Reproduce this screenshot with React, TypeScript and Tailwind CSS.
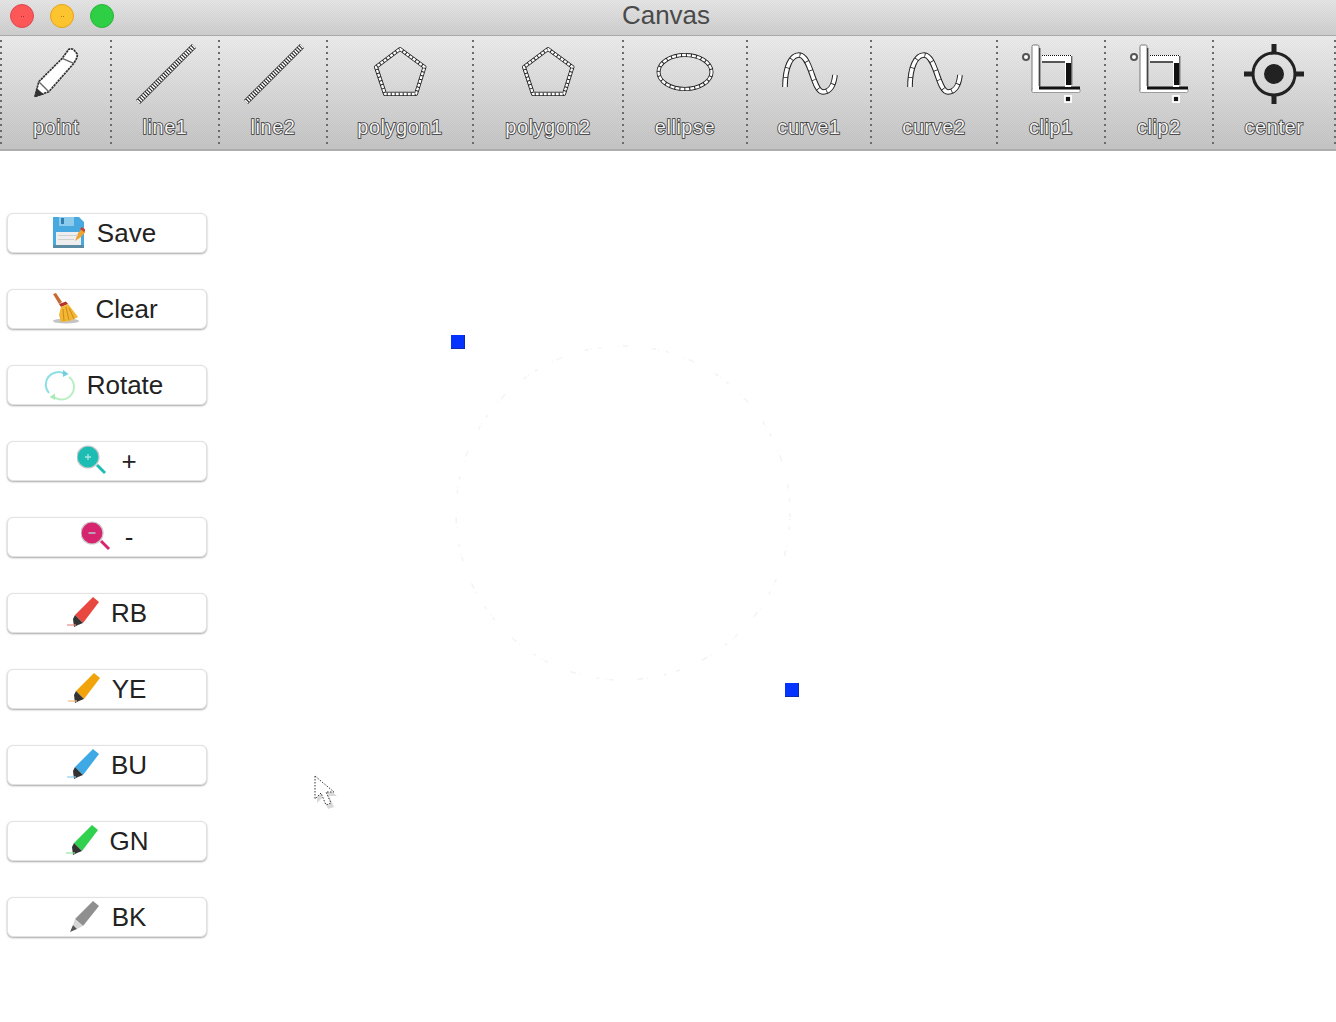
import type { ReactNode } from "react"

function Outline({ children }: { children: ReactNode }) {
  return <>{children}</>
}

// dithered two-tone stroke used by the toolbar glyphs
function Dither({ d }: { d: string }) {
  return (
    <Outline>
      <path d={d} fill="none" stroke="#222" strokeWidth="4" strokeLinejoin="round" />
      <path d={d} fill="none" stroke="#fff" strokeWidth="2.3" strokeDasharray="3 1" strokeLinejoin="round" />
    </Outline>
  )
}

const PointIcon = () => (
  <svg viewBox="0 0 64 64" className="w-16 h-16">
    <path d="M10.8 54.7L14.8 39.7L38.2 16.3L44.8 7.3Q48 6 50 8L53.2 12Q54 15 49.8 21.3L24.8 49.7Z" fill="#fff" stroke="#333" strokeWidth="1.7" strokeDasharray="2.4 0.7" strokeLinejoin="round" />
    <path d="M10.8 54.7L12.5 46L20 52.5Z" fill="#333" />
    <path d="M14.8 39.7L24.8 49.7M38.2 16.3L49.8 21.3" fill="none" stroke="#666" strokeWidth="1.3" />
  </svg>
)

const LineIcon = () => (
  <svg viewBox="0 0 64 64" className="w-16 h-16">
    <path d="M5 60L61 4" stroke="#222" strokeWidth="5.6" />
    <path d="M5 60L61 4" stroke="#fff" strokeWidth="4.4" strokeDasharray="1.5 1.1" />
  </svg>
)

const PolygonIcon = () => (
  <svg viewBox="0 0 64 64" className="w-16 h-16">
    <Dither d="M32 7L56.5 25L48 52H17L8 25Z" />
    <path d="M17 50H48" stroke="#888" strokeWidth="1" />
  </svg>
)

const EllipseIcon = () => (
  <svg viewBox="0 0 64 64" className="w-16 h-16">
    <ellipse cx="32" cy="30" rx="26.5" ry="17" fill="none" stroke="#222" strokeWidth="4" />
    <ellipse cx="32" cy="30" rx="26.5" ry="17" fill="none" stroke="#fff" strokeWidth="2.3" strokeDasharray="4 1" />
  </svg>
)

const CurveIcon = () => (
  <svg viewBox="0 0 64 64" className="w-16 h-16">
    <path d="M8 45C8 25 14 13 22 13C34 13 36 50 46 50C53 50 57 43 58 33" fill="none" stroke="#222" strokeWidth="5.6" />
    <path d="M8 45C8 25 14 13 22 13C34 13 36 50 46 50C53 50 57 43 58 33" fill="none" stroke="#fff" strokeWidth="3.6" strokeDasharray="9 0.8" />
  </svg>
)

const ClipIcon = () => (
  <svg viewBox="0 0 64 64" className="w-16 h-16">
    {/* outer corner */}
    <rect x="13" y="3" width="7" height="47" rx="1.5" fill="#fff" stroke="#777" strokeWidth="1" />
    <rect x="13" y="46.5" width="48" height="4" rx="1.2" fill="#fff" stroke="#888" strokeWidth="0.8" />
    <rect x="14" y="44" width="6" height="4" fill="#fff" />
    <rect x="20" y="44.5" width="41" height="3" fill="#111" />
    <rect x="20" y="6" width="1.4" height="39" fill="#444" />
    {/* inner corner */}
    <rect x="23" y="13" width="30" height="6.5" fill="#fff" />
    <path d="M23 13.5H53" stroke="#111" strokeWidth="1.2" strokeDasharray="1 1" />
    <rect x="23" y="19" width="24" height="2" fill="#555" />
    <rect x="46" y="14" width="6" height="31" fill="#fff" />
    <rect x="47" y="21" width="5" height="22" fill="#111" />
    <rect x="52" y="14" width="1.4" height="29" fill="#666" />
    <circle cx="7" cy="15" r="3" fill="#fff" stroke="#555" strokeWidth="2" />
    <rect x="46" y="54" width="6" height="6" fill="#111" stroke="#fff" strokeWidth="1.8" />
  </svg>
)

const CenterIcon = () => (
  <svg viewBox="0 0 64 64" className="w-16 h-16">
    <circle cx="32" cy="32" r="21" fill="none" stroke="#222" strokeWidth="3" />
    <circle cx="32" cy="32" r="10" fill="#222" />
    <path d="M32 2V11M32 53V62M2 32H11M53 32H62" stroke="#222" strokeWidth="5" />
  </svg>
)

const tools = [
  { label: "point", width: "w-[108px]", icon: <PointIcon /> },
  { label: "line1", width: "w-[106px]", icon: <LineIcon /> },
  { label: "line2", width: "w-[106px]", icon: <LineIcon /> },
  { label: "polygon1", width: "w-[144px]", icon: <PolygonIcon /> },
  { label: "polygon2", width: "w-[148px]", icon: <PolygonIcon /> },
  { label: "ellipse", width: "w-[122px]", icon: <EllipseIcon /> },
  { label: "curve1", width: "w-[122px]", icon: <CurveIcon /> },
  { label: "curve2", width: "w-[124px]", icon: <CurveIcon /> },
  { label: "clip1", width: "w-[106px]", icon: <ClipIcon /> },
  { label: "clip2", width: "w-[106px]", icon: <ClipIcon /> },
  { label: "center", width: "w-[120px]", icon: <CenterIcon /> },
]

const Separator = () => (
  <span className="w-[2px] shrink-0 my-1 bg-[repeating-linear-gradient(to_bottom,#6b6b6b_0_2px,transparent_2px_6px)]" />
)

const SaveIcon = () => (
  <svg viewBox="0 0 32 32" className="w-8 h-8">
    <path d="M0 0H26L31 5V31H0Z" fill="#48a9e0" />
    <rect x="6" y="0" width="15" height="9" fill="#8ccbec" />
    <rect x="8" y="1" width="3" height="6" fill="#2f7fb0" />
    <rect x="3" y="15" width="25" height="13" fill="#eeeeee" />
    <rect x="0" y="28" width="31" height="3" fill="#5b8ba3" />
    <path d="M22 24L25 16L30 11L33 14L28 20Z" fill="#f0a32f" />
    <path d="M29 10L33 13L31 15L27 12Z" fill="#c8452e" />
    <rect x="5" y="18" width="20" height="1" fill="#cfcfcf" />
    <rect x="5" y="22" width="16" height="1" fill="#cfcfcf" />
  </svg>
)

const ClearIcon = () => (
  <svg viewBox="0 0 32 32" className="w-8 h-8">
    <ellipse cx="15" cy="28" rx="13" ry="2.5" fill="#c4c4c4" />
    <path d="M2 1L5 0L11 9L8 11Z" fill="#c96a30" />
    <path d="M8 11L15 8.5L17 11L10 14Z" fill="#b5322a" />
    <path d="M10 14L17 11L27 24L19 28L10 29L8 22Z" fill="#f2b632" />
    <path d="M12 16L13 28M15 14L18 27M18 15L23 26" stroke="#d08a1a" strokeWidth="1" fill="none" />
  </svg>
)

const RotateIcon = () => (
  <svg viewBox="0 0 32 32" className="w-8 h-8">
    <path d="M6 24A12.5 12.5 0 0 1 21 4.5" fill="none" stroke="#8adfe4" strokeWidth="2" />
    <path d="M26 8A12.5 12.5 0 0 1 11 28" fill="none" stroke="#b8efc0" strokeWidth="2" />
    <path d="M20 1L25.5 5L20 8Z" fill="#6fd0dc" />
    <path d="M12 24.5L6.5 28L12 31Z" fill="#a8ecb4" />
  </svg>
)

const ZoomIcon = ({ color, sign }: { color: string; sign: "plus" | "minus" }) => (
  <svg viewBox="0 0 32 32" className="w-8 h-8">
    <path d="M20 20L28 28" stroke={color} strokeWidth="3" />
    <circle cx="11" cy="12" r="11" fill={color} stroke="#c9c9c9" strokeWidth="1.2" />
    <path d={sign === "plus" ? "M8 12H14M11 9V15" : "M7.5 12H14.5"} stroke="#a9e6e0" strokeWidth="1.3" fill="none" />
  </svg>
)

const MarkerIcon = ({ body, mark }: { body: string; mark: string }) => (
  <svg viewBox="0 0 32 32" className="w-8 h-8">
    <path d="M26 0L32 5L16 26L8 18Z" fill={body} />
    <path d="M8 18L16 26L11 28L7 30L6 22Z" fill="#333" />
    <path d="M0 28H9" stroke={mark} strokeWidth="1.2" />
  </svg>
)

const GrayMarkerIcon = () => (
  <svg viewBox="0 0 32 32" className="w-8 h-8">
    <path d="M25 0L31 5L15 25L7 18Z" fill="#8f8f8f" />
    <path d="M7 18L15 25L9 28L5 24Z" fill="#d6d6d6" />
    <path d="M2 31L9 28L5 24Z" fill="#555" />
  </svg>
)

const buttons = [
  { label: "Save", icon: <SaveIcon />, shift: "pr-[5px]" },
  { label: "Clear", icon: <ClearIcon />, shift: "pr-[5px]" },
  { label: "Rotate", icon: <RotateIcon />, shift: "pr-[8px]" },
  { label: "+", icon: <ZoomIcon color="#1dbdb4" sign="plus" />, shift: "pl-0" },
  { label: "-", icon: <ZoomIcon color="#d6246e" sign="minus" />, shift: "pl-0" },
  { label: "RB", icon: <MarkerIcon body="#e8483f" mark="#e98a86" />, shift: "pl-0" },
  { label: "YE", icon: <MarkerIcon body="#f0a30a" mark="#f3bd7a" />, shift: "pl-0" },
  { label: "BU", icon: <MarkerIcon body="#3fa9e5" mark="#8fd0ee" />, shift: "pl-0" },
  { label: "GN", icon: <MarkerIcon body="#2fd14f" mark="#8fe6a0" />, shift: "pl-0" },
  { label: "BK", icon: <GrayMarkerIcon />, shift: "pl-0" },
]

export default function App() {
  return (
    <div className="w-[1336px] h-[1022px] overflow-hidden bg-white flex flex-col [font-family:'Liberation_Sans',Arial,sans-serif]">
      {/* title bar */}
      <div className="h-9 shrink-0 grid grid-cols-[1fr_auto_1fr] items-center pb-[5px] [background:repeating-conic-gradient(#00000008_0_25%,transparent_0_50%)_0_0/2px_2px,linear-gradient(#e6e6e6,#cfcfcf)] border-b border-[#a8a8a8]">
        <div className="flex gap-4 pl-[10px] pt-[2px]">
          <span className="w-6 h-6 rounded-full bg-[#fd5757] border border-[#dd4a50] flex items-center justify-center gap-px">
            <span className="w-px h-px bg-[#a33]" />
            <span className="w-px h-px bg-[#a33]" />
          </span>
          <span className="w-6 h-6 rounded-full bg-[#fcc530] border border-[#e6a21d] flex items-center justify-center gap-px">
            <span className="w-px h-px bg-[#b57a10]" />
            <span className="w-px h-px bg-[#b57a10]" />
          </span>
          <span className="w-6 h-6 rounded-full bg-[#2ecf45] border border-[#2bb53c]" />
        </div>
        <span className="text-[26px] leading-none text-[#4a4a4a] mr-1">Canvas</span>
        <div />
      </div>

      {/* toolbar */}
      <div className="h-[115px] shrink-0 flex [background:repeating-conic-gradient(#00000008_0_25%,transparent_0_50%)_0_0/2px_2px,linear-gradient(#ececec,#c5c5c5)] border-b-2 border-[#adadad]">
        <Separator />
        {tools.map((tool) => (
          <div key={tool.label} className="contents">
            <div className={`${tool.width} shrink-0 flex flex-col items-center pt-[6px]`}>
              {tool.icon}
              <span className="mt-[9px] text-[20px] leading-6 tracking-[0.55px] text-[#f2f2f2] [-webkit-text-stroke:1.6px_#333] [paint-order:stroke_fill]">
                {tool.label}
              </span>
            </div>
            <Separator />
          </div>
        ))}
      </div>

      <div className="flex-1 flex">
        {/* side buttons */}
        <div className="w-[207px] shrink-0 flex flex-col gap-9 pl-[7px] pt-[62px]">
          {buttons.map((b) => (
            <button
              key={b.label}
              className={`w-[200px] h-10 flex items-center justify-center gap-3 rounded-md bg-white border border-[#e2e2e2] shadow-[0_1px_2px_#a8a8a8] text-[26px] leading-none text-[#222] ${b.shift}`}
            >
              {b.icon}
              <span>{b.label}</span>
            </button>
          ))}
        </div>

        {/* canvas */}
        <div className="flex-1 relative">
          <svg viewBox="0 0 340 340" className="absolute left-[246px] top-[192px] w-[340px] h-[340px]">
            <circle cx="170" cy="170" r="167" fill="none" stroke="#f3f3f3" strokeWidth="1.5" strokeDasharray="4 2 1 7 3 16 1 4 6 24" />
          </svg>
          <div className="absolute left-[244px] top-[184px] w-[14px] h-[14px] bg-[#0533ff] border-r border-b border-[#0a2ab0]" />
          <div className="absolute left-[578px] top-[532px] w-[14px] h-[14px] bg-[#0533ff] border-r border-b border-[#0a2ab0]" />
          <svg viewBox="0 0 24 38" className="absolute left-[106px] top-[623px] w-6 h-[38px]">
            <path d="M3 3V27L9 21L14 33L20 31L15 20H23Z" fill="#d9d9d9" transform="translate(1 2)" />
            <path d="M2 2V25L8 19L13 31L18 29L13 18H21Z" fill="#fff" stroke="#333" strokeWidth="1" strokeDasharray="1.5 1.5" />
          </svg>
        </div>
      </div>
    </div>
  )
}
